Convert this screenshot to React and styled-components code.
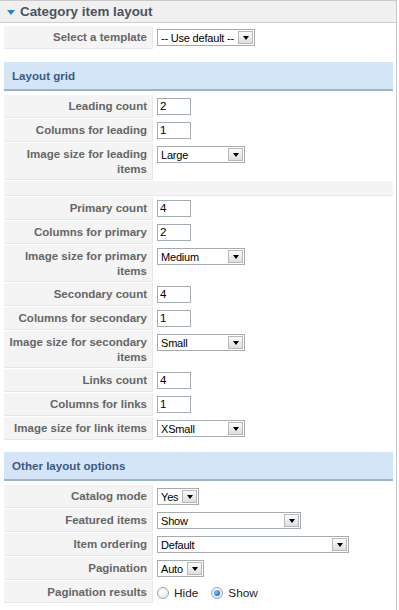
import React from "react";
import styled, { createGlobalStyle } from "styled-components";

const GlobalStyle = createGlobalStyle`
  html, body { margin: 0; padding: 0; background: #fff; }
  body { font-family: "Liberation Sans", Arial, sans-serif; }
`;

const Panel = styled.div`
  width: 397px;
  min-height: 610px;
  border-top: 1px solid #c9c9c9;
  border-right: 1px solid #c9c9c9;
  box-sizing: border-box;
`;

const PanelHeader = styled.div`
  height: 21px;
  background: #f0f0f0;
  border-bottom: 1px solid #cdcdcd;
  display: flex;
  align-items: center;
  gap: 5px;
  padding-left: 7px;
  font-weight: bold;
  font-size: 13.4px;
  color: #4a5361;
`;

const Caret = styled.span`
  width: 0;
  height: 0;
  border-left: 4px solid transparent;
  border-right: 4px solid transparent;
  border-top: 5px solid #2c7fd6;
  margin-top: 1px;
`;

const Body = styled.div`
  padding: 3px 3px 0 4px;
`;

const ParamTable = styled.div`
  display: flex;
  flex-direction: column;
  gap: 1px;
`;

const Row = styled.div`
  display: grid;
  grid-template-columns: 149px 1fr;
  column-gap: 1px;
`;

const Label = styled.div`
  background: #f4f4f4;
  border-bottom: 1px solid #e7e7e7;
  border-right: 1px solid #e7e7e7;
  text-align: right;
  padding: 4px 5px 2px 5px;
  font-weight: bold;
  font-size: 11.5px;
  line-height: 15px;
  color: #666;
`;

const Value = styled.div`
  padding: 3px;
  display: flex;
  align-items: flex-start;
  gap: 4px;
`;

const Spacer = styled.div`
  height: 14px;
  background: #f4f4f4;
  border-bottom: 1px solid #e7e7e7;
`;

const SectionBand = styled.div`
  margin-top: ${(p) => p.$top}px;
  margin-bottom: 4px;
  height: 27px;
  background: #d5e5f8;
  border-bottom: 2px solid #9db2cb;
  display: flex;
  align-items: center;
  padding-left: 8px;
  font-weight: bold;
  font-size: 11.6px;
  color: #3b5a82;
`;

const TextInput = styled.div`
  width: 34px;
  height: 17px;
  box-sizing: border-box;
  border: 1px solid #a4abb1;
  background: #fff;
  font-size: 11.5px;
  line-height: 15px;
  padding-left: 2px;
  color: #000;
`;

const SelectBox = styled.div`
  width: ${(p) => p.$w}px;
  height: 17px;
  box-sizing: border-box;
  border: 1px solid #a4abb1;
  background: #fff;
  display: flex;
  align-items: center;
  justify-content: space-between;
  font-size: 11px;
  color: #000;
  padding-left: 3px;
  padding-right: 1px;
  letter-spacing: -0.2px;
`;

const ArrowButton = styled.span`
  width: 15px;
  height: 13px;
  box-sizing: border-box;
  border: 1px solid #b8b8b8;
  background: linear-gradient(#fbfbfb, #dedede);
  display: flex;
  align-items: center;
  justify-content: center;
  &::after {
    content: "";
    width: 0;
    height: 0;
    border-left: 3.5px solid transparent;
    border-right: 3.5px solid transparent;
    border-top: 4px solid #000;
    margin-top: 1px;
  }
`;

const RadioGroup = styled.label`
  display: flex;
  align-items: center;
  gap: 5px;
  font-size: 11.8px;
  color: #222;
  margin-right: 9px;
  margin-top: 2px;
`;

const RadioDot = styled.span`
  width: 12px;
  height: 12px;
  box-sizing: border-box;
  border-radius: 50%;
  border: 1px solid #9aa6b4;
  background: radial-gradient(circle at 40% 35%, #ffffff, #dfe3e8);
  display: flex;
  align-items: center;
  justify-content: center;
  &::after {
    content: "";
    display: ${(p) => (p.$checked ? "block" : "none")};
    width: 6px;
    height: 6px;
    border-radius: 50%;
    background: radial-gradient(circle at 35% 35%, #8fd0ff, #1e6fb8 70%, #0f4f8c);
  }
`;

const Select = ({ w, children }) => (
  <SelectBox $w={w}>
    <span>{children}</span>
    <ArrowButton />
  </SelectBox>
);

const Param = ({ label, children }) => (
  <Row>
    <Label>{label}</Label>
    <Value>{children}</Value>
  </Row>
);

export default function App() {
  return (
    <>
      <GlobalStyle />
      <Panel>
        <PanelHeader>
          <Caret />
          Category item layout
        </PanelHeader>
        <Body>
          <ParamTable>
            <Param label="Select a template">
              <Select w={98}>-- Use default --</Select>
            </Param>
          </ParamTable>

          <SectionBand $top={13}>Layout grid</SectionBand>
          <ParamTable>
            <Param label="Leading count"><TextInput>2</TextInput></Param>
            <Param label="Columns for leading"><TextInput>1</TextInput></Param>
            <Param label={<>Image size for leading<br />items</>}>
              <Select w={88}>Large</Select>
            </Param>
            <Spacer />
            <Param label="Primary count"><TextInput>4</TextInput></Param>
            <Param label="Columns for primary"><TextInput>2</TextInput></Param>
            <Param label={<>Image size for primary<br />items</>}>
              <Select w={88}>Medium</Select>
            </Param>
            <Param label="Secondary count"><TextInput>4</TextInput></Param>
            <Param label="Columns for secondary"><TextInput>1</TextInput></Param>
            <Param label={<>Image size for secondary<br />items</>}>
              <Select w={88}>Small</Select>
            </Param>
            <Param label="Links count"><TextInput>4</TextInput></Param>
            <Param label="Columns for links"><TextInput>1</TextInput></Param>
            <Param label="Image size for link items">
              <Select w={88}>XSmall</Select>
            </Param>
          </ParamTable>

          <SectionBand $top={12}>Other layout options</SectionBand>
          <ParamTable>
            <Param label="Catalog mode"><Select w={42}>Yes</Select></Param>
            <Param label="Featured items"><Select w={144}>Show</Select></Param>
            <Param label="Item ordering"><Select w={192}>Default</Select></Param>
            <Param label="Pagination"><Select w={47}>Auto</Select></Param>
            <Param label="Pagination results">
              <RadioGroup><RadioDot />Hide</RadioGroup>
              <RadioGroup><RadioDot $checked />Show</RadioGroup>
            </Param>
          </ParamTable>
        </Body>
      </Panel>
    </>
  );
}
